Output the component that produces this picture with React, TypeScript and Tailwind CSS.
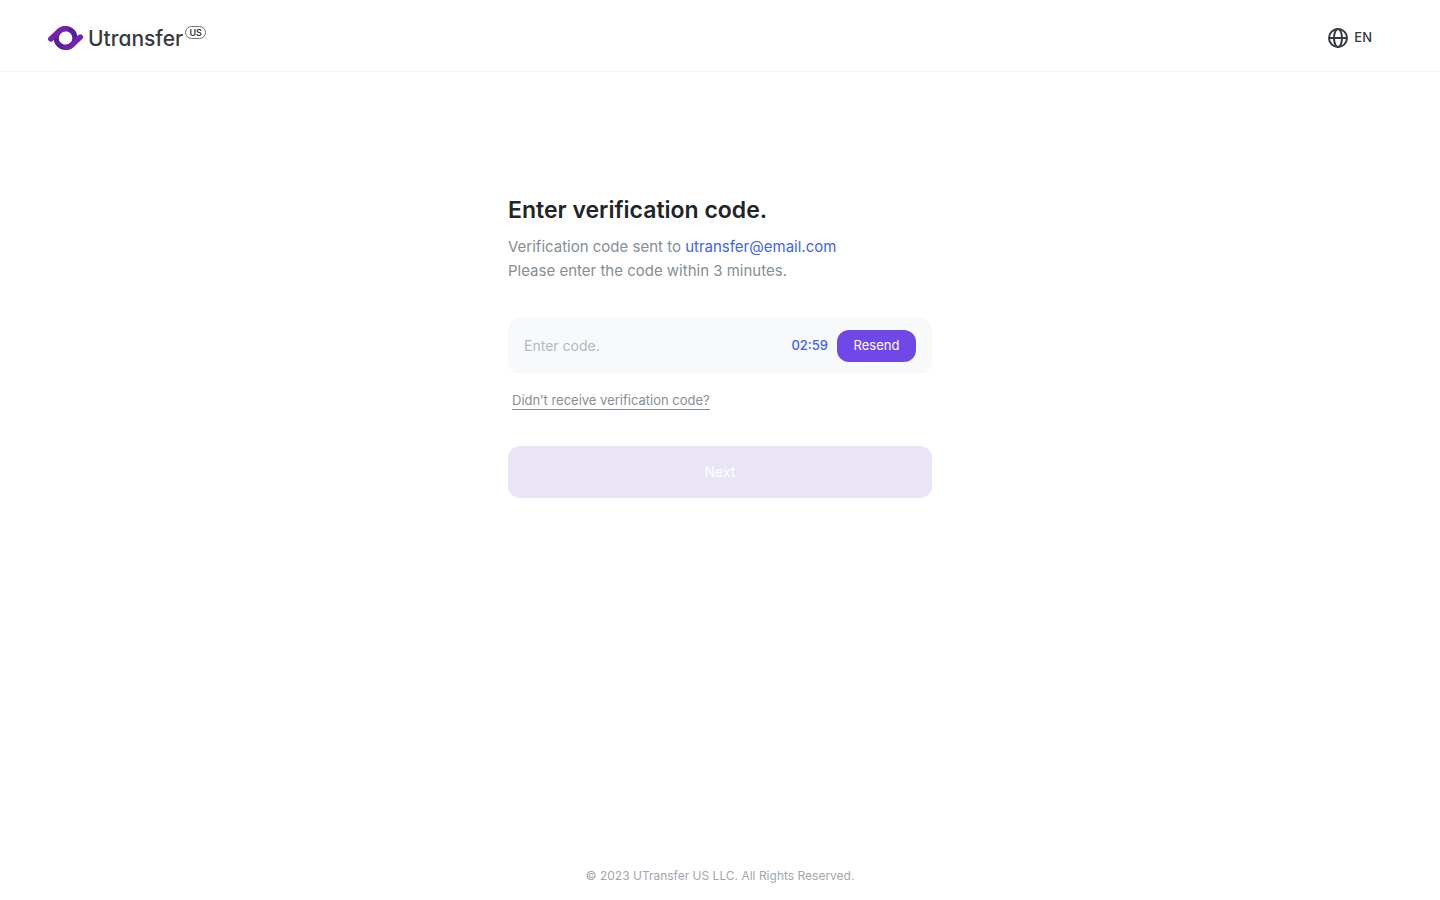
import React, { useState } from "react";

const LogoMark: React.FC = () => (
  <svg width="36" height="24" viewBox="0 0 36 24" fill="none" aria-hidden="true">
    <circle cx="17.6" cy="12" r="9.4" stroke="#56209A" strokeWidth="5.2" />
    <path d="M2.8 13L11.3 5A9.4 9.4 0 0 1 17.6 2.6" stroke="#7522A8" strokeWidth="5.4" strokeLinecap="round" />
    <path d="M32.4 11L23.9 19A9.4 9.4 0 0 1 17.6 21.4" stroke="#7522A8" strokeWidth="5.4" strokeLinecap="round" />
  </svg>
);

const GlobeIcon: React.FC = () => (
  <svg width="20" height="20" viewBox="0 0 20 20" fill="none" stroke="#343A40" strokeWidth="2" aria-hidden="true">
    <circle cx="10" cy="10" r="9" />
    <ellipse cx="10" cy="10" rx="4" ry="9" />
    <path d="M1 10H19" />
  </svg>
);

const Header: React.FC = () => (
  <header className="flex h-[72px] items-center justify-between border-b border-[#f1f3f5] pl-12 pr-[68px]">
    <a href="/" aria-label="Utransfer US home" className="flex items-center gap-1 pt-1">
      <LogoMark />
      <span className="flex items-start text-[#343a40]">
        <span className="pt-0.5 text-[21px] font-medium leading-6 [font-feature-settings:'cv11']">Utransfer</span>
        <span className="ml-0.5 mt-px flex h-[13px] w-[21px] items-center justify-center rounded-full border border-[#6c7177] text-[9px] font-semibold leading-none">
          US
        </span>
      </span>
    </a>
    <button type="button" aria-label="Language: EN" className="flex items-center gap-1.5 pt-1 text-[13px] font-medium text-[#343a40]">
      <GlobeIcon />
      EN
    </button>
  </header>
);

const VerificationForm: React.FC = () => {
  const [code, setCode] = useState("");

  return (
    <form className="w-full max-w-[424px]" onSubmit={(e) => e.preventDefault()}>
      <h1 className="text-[23px] font-semibold leading-8 text-[#212529]">Enter verification code.</h1>
      <p className="mt-[9px] text-[15px] leading-6 text-[#868e96]">
        Verification code sent to <span className="text-[#4263eb]">utransfer@email.com</span>
        <br />
        Please enter the code within 3 minutes.
      </p>

      <div className="mt-[35px] flex h-14 items-center rounded-xl bg-[#f8f9fb] px-4">
        <input
          type="text"
          inputMode="numeric"
          autoComplete="one-time-code"
          aria-label="Verification code"
          placeholder="Enter code."
          value={code}
          onChange={(e) => setCode(e.target.value)}
          className="min-w-0 flex-1 bg-transparent text-sm leading-6 text-[#212529] outline-none placeholder:text-[#b1b8c6]"
        />
        <span className="mr-[9px] text-[13px] font-medium text-[#4263eb]">02:59</span>
        <button type="button" className="h-8 w-[79px] rounded-xl bg-[#7048e8] text-[13px] text-white">
          Resend
        </button>
      </div>

      <div className="mt-[17px] flex pl-1">
        <a href="#help" className="border-b border-[#868e96] text-[13px] leading-[18px] text-[#868e96]">
          Didn’t receive verification code?
        </a>
      </div>

      <button type="submit" disabled={!code} className="mt-9 h-[52px] w-full rounded-xl bg-[#7048e8] text-sm text-white disabled:bg-[#e9e5f5]">
        Next
      </button>
    </form>
  );
};

const App: React.FC = () => {
  return (
    <div className="flex min-h-screen flex-col bg-white font-['Inter',sans-serif]">
      <Header />
      <main className="flex flex-1 justify-center px-4 pt-[122px]">
        <VerificationForm />
      </main>
      <footer className="pb-[15px] text-center text-xs leading-[18px] text-[#a1a7ae]">
        © 2023 UTransfer US LLC. All Rights Reserved.
      </footer>
    </div>
  );
};

export default App;
